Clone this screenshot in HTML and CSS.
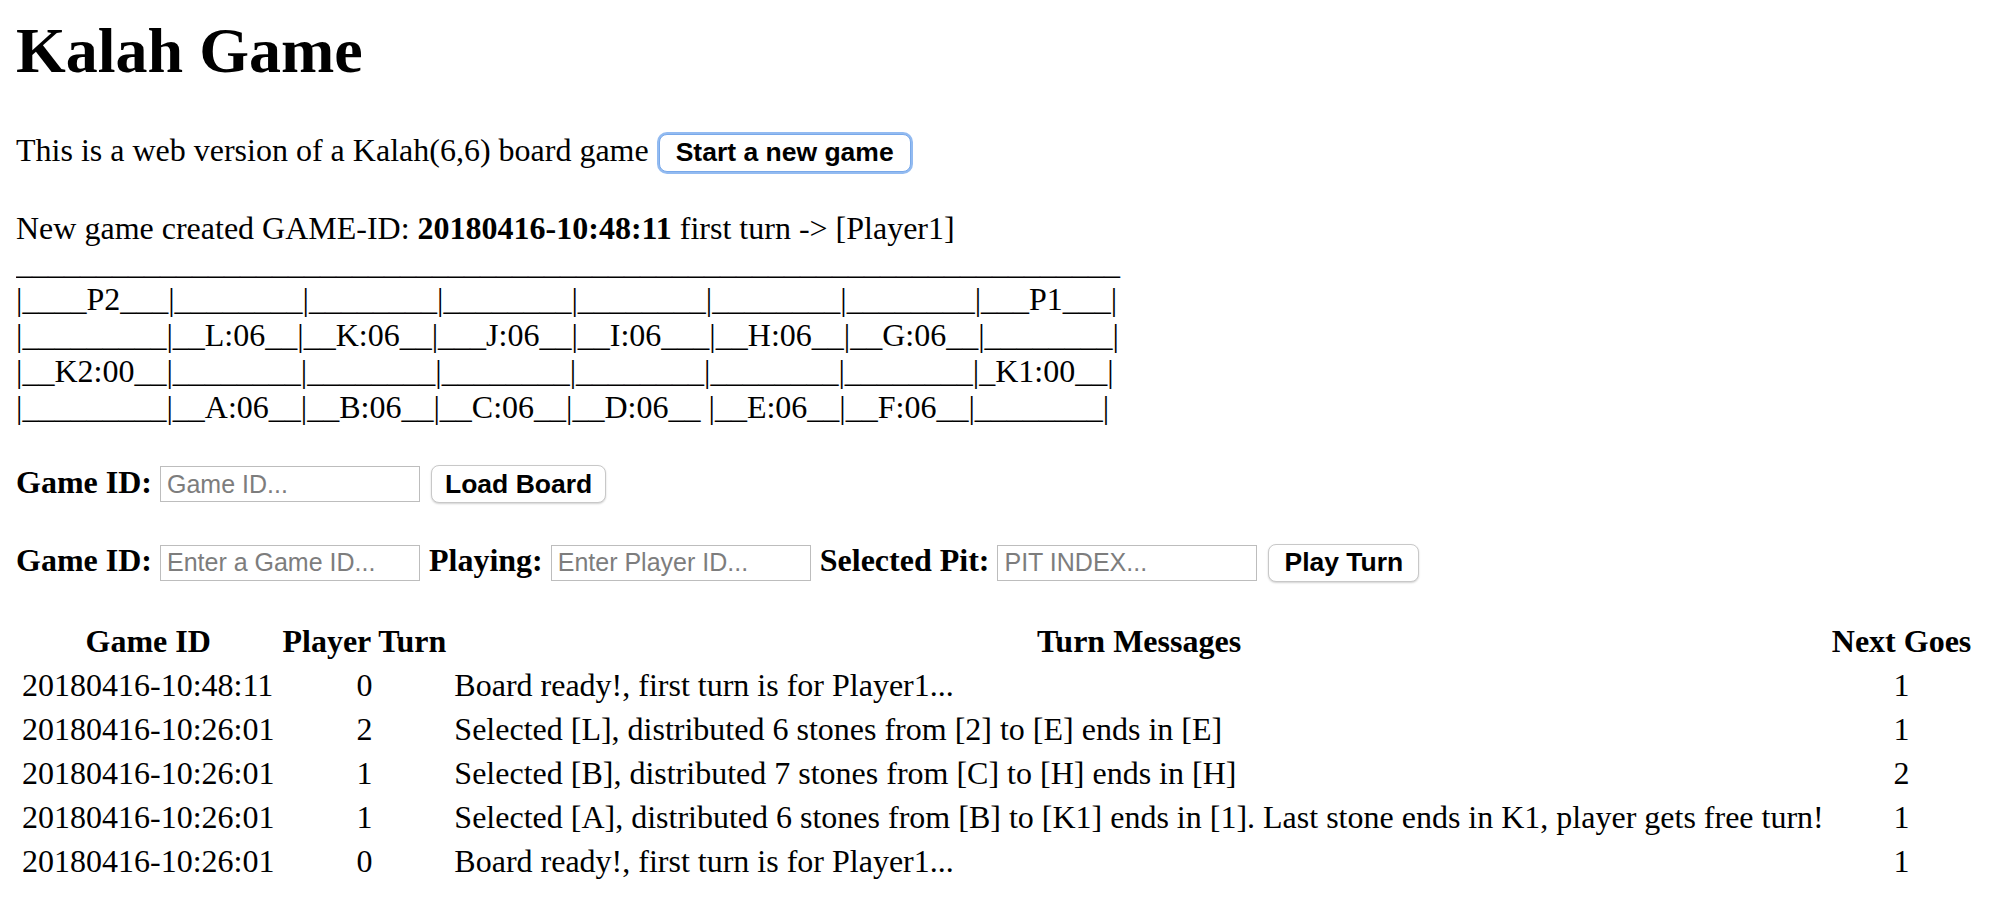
FILE: index.html
```html
<!DOCTYPE html>
<html>
<head>
<meta charset="utf-8">
<title>Kalah Game</title>
<link rel="stylesheet" href="styles.css">
</head>
<body>
<h1 class="title">Kalah Game</h1>
<p class="intro">This is a web version of a Kalah(6,6) board game <button class="btn btn-focus">Start a new game</button></p>
<p class="status">New game created GAME-ID: <b>20180416-10:48:11</b> first turn -&gt; [Player1]</p>
<div class="board">
<div class="board-line">_____________________________________________________________________</div>
<div class="board-line">|____P2___|________|________|________|________|________|________|___P1___|</div>
<div class="board-line">|_________|__L:06__|__K:06__|___J:06__|__I:06___|__H:06__|__G:06__|________|</div>
<div class="board-line">|__K2:00__|________|________|________|________|________|________|_K1:00__|</div>
<div class="board-line">|_________|__A:06__|__B:06__|__C:06__|__D:06__ |__E:06__|__F:06__|________|</div>
</div>
<form class="form-row">
<label class="lbl">Game ID:</label> <input class="field" type="text" placeholder="Game ID..."> <button class="btn" type="button">Load Board</button>
</form>
<form class="form-row">
<label class="lbl">Game ID:</label> <input class="field" type="text" placeholder="Enter a Game ID..."> <label class="lbl">Playing:</label> <input class="field" type="text" placeholder="Enter Player ID..."> <label class="lbl">Selected Pit:</label> <input class="field" type="text" placeholder="PIT INDEX..."> <button class="btn btn-play" type="button">Play Turn</button>
</form>
<table class="turns">
<thead>
<tr><th>Game ID</th><th>Player Turn</th><th>Turn Messages</th><th>Next Goes</th></tr>
</thead>
<tbody>
<tr><td>20180416-10:48:11</td><td class="c">0</td><td>Board ready!, first turn is for Player1...</td><td class="c">1</td></tr>
<tr><td>20180416-10:26:01</td><td class="c">2</td><td>Selected [L], distributed 6 stones from [2] to [E] ends in [E]</td><td class="c">1</td></tr>
<tr><td>20180416-10:26:01</td><td class="c">1</td><td>Selected [B], distributed 7 stones from [C] to [H] ends in [H]</td><td class="c">2</td></tr>
<tr><td>20180416-10:26:01</td><td class="c">1</td><td>Selected [A], distributed 6 stones from [B] to [K1] ends in [1]. Last stone ends in K1, player gets free turn!</td><td class="c">1</td></tr>
<tr><td>20180416-10:26:01</td><td class="c">0</td><td>Board ready!, first turn is for Player1...</td><td class="c">1</td></tr>
</tbody>
</table>
</body>
</html>
```
FILE: styles.css
```css
html, body {
  background: #ffffff;
}
body {
  margin: 0 16px 16px 16px;
  padding-top: 1px;
  font-family: "Liberation Serif", "Times New Roman", serif;
  font-size: 32px;
  line-height: 36px;
  color: #000;
}
.title {
  font-size: 64px;
  line-height: 72px;
  font-weight: bold;
  margin: 14px 0 45px 0;
}
.intro {
  margin: 0 0 38px 0;
}
.status {
  margin: 0;
}
.board {
  margin: -1px 0 0 0;
}
.board-line {
  white-space: pre;
}
.form-row {
  margin: 39px 0 0 0;
}
.form-row + .form-row {
  margin-top: 39px;
}
.lbl {
  font-weight: bold;
}
.field {
  font-family: "Liberation Sans", Arial, sans-serif;
  font-size: 25px;
  width: 260px;
  height: 36px;
  padding: 0 6px;
  border: 1px solid #bdbdbd;
  border-radius: 0;
  box-sizing: border-box;
  vertical-align: baseline;
  color: #000;
  background: #fff;
  margin: 0 1px 0 0;
}
.field::placeholder {
  color: #7d7d7d;
}
.btn {
  font-family: "Liberation Sans", Arial, sans-serif;
  font-size: 26.5px;
  font-weight: bold;
  color: #000;
  background: #fff;
  border: 1px solid #c8c8c8;
  border-radius: 8px;
  padding: 0 13px;
  height: 38px;
  box-shadow: 0 1px 2px rgba(0,0,0,0.18);
  margin: 0 2px;
}
.btn-play {
  padding: 0 15px;
}
.btn-focus {
  border-color: #79a9ea;
  box-shadow: 0 0 0 2px #93bbf1;
  padding: 0 16px;
}
.turns {
  margin-top: 35px;
  border-spacing: 4px;
}
.turns th, .turns td {
  padding: 2px;
  text-align: left;
}
.turns th {
  text-align: center;
  font-weight: bold;
}
.turns td.c {
  text-align: center;
}
```
